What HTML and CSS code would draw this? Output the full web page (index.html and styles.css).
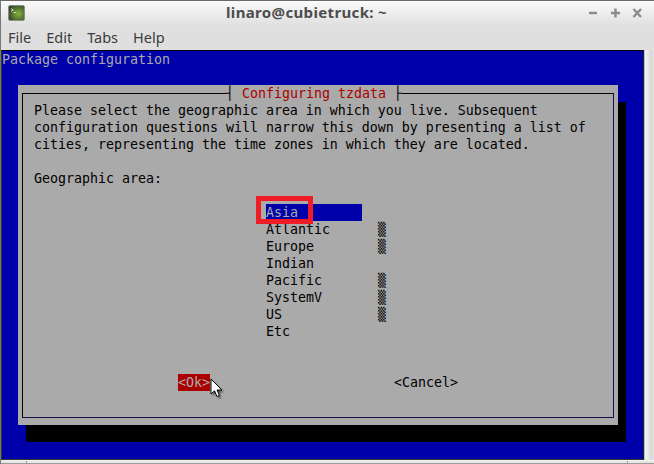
FILE: index.html
```html
<!DOCTYPE html>
<html lang="en">
<head>
<meta charset="utf-8">
<title>linaro@cubietruck: ~</title>
<link rel="stylesheet" href="styles.css">
</head>
<body>
<div class="window">
  <header class="titlebar">
    <svg class="app-icon" width="17" height="16" viewBox="0 0 18 18" preserveAspectRatio="none">
      <defs>
        <radialGradient id="iconbg" cx="0.62" cy="0.55" r="0.7">
          <stop offset="0" stop-color="#86b240"/>
          <stop offset="0.6" stop-color="#4f7030"/>
          <stop offset="1" stop-color="#2f3a2a"/>
        </radialGradient>
      </defs>
      <rect x="0.5" y="0.5" width="17" height="17" rx="2" fill="url(#iconbg)" stroke="#8a8a86"/>
      <path d="M3.5 4 L5.500 5.500 L3.500 7" fill="none" stroke="#f2f2ee" stroke-width="1"/>
      <path d="M6 8.500 H8.500" stroke="#dfe8d2" stroke-width="1"/>
    </svg>
    <div class="title">linaro@cubietruck: ~</div>
    <div class="controls">
      <svg width="60" height="12" viewBox="0 0 60 12">
        <g stroke="#8b8b8b" stroke-width="2.4" fill="none">
          <path d="M3 6 H11"/>
          <path d="M25 6 H34 M29.500 1.500 V10.500"/>
          <path d="M47.500 2 L55 10 M55 2 L47.500 10"/>
        </g>
      </svg>
    </div>
  </header>
  <nav class="menubar">
    <span class="menu-item">File</span>
    <span class="menu-item">Edit</span>
    <span class="menu-item">Tabs</span>
    <span class="menu-item">Help</span>
  </nav>
  <div class="workspace">
    <main class="terminal">
      <div class="backtitle">Package configuration</div>
      <section class="dialog">
        <div class="frame">
          <h1 class="dialog-title"><span class="tee">┤</span> Configuring tzdata <span class="tee">├</span></h1>
          <p class="prompt">Please select the geographic area in which you live. Subsequent
configuration questions will narrow this down by presenting a list of
cities, representing the time zones in which they are located.

Geographic area:</p>
          <ul class="options">
            <li class="option selected">Asia</li>
            <li class="option">Atlantic<span class="scroll">▒</span></li>
            <li class="option">Europe<span class="scroll">▒</span></li>
            <li class="option">Indian</li>
            <li class="option">Pacific<span class="scroll">▒</span></li>
            <li class="option">SystemV<span class="scroll">▒</span></li>
            <li class="option">US<span class="scroll">▒</span></li>
            <li class="option">Etc</li>
          </ul>
          <div class="buttons">
            <span class="btn btn-ok">&lt;Ok&gt;</span>
            <span class="btn btn-cancel">&lt;Cancel&gt;</span>
          </div>
        </div>
      </section>
      <div class="annotation"></div>
      <svg class="pointer" width="16" height="24" viewBox="0 0 16 24">
        <defs><filter id="blur" x="-30%" y="-30%" width="160%" height="160%"><feGaussianBlur stdDeviation="0.9"/></filter></defs>
        <path d="M2 2 V17 L5.500 13.800 L8 19.500 L10.500 18.300 L8 13 H13 Z" fill="#000" opacity="0.55" filter="url(#blur)" transform="translate(0.800 1.200)"/>
        <path d="M1 1 V16 L4.500 12.800 L7 18.500 L9.500 17.300 L7 12 H12 Z" fill="#fff" stroke="#000" stroke-width="1" stroke-linejoin="round"/>
      </svg>
    </main>
    <div class="scrollbar"></div>
  </div>
  <footer class="statusbar"><span class="grip"></span></footer>
</div>
</body>
</html>
```
FILE: styles.css
```css
* { box-sizing: border-box; }
html, body { margin: 0; padding: 0; }
body { background: #dfdfdf; }
.window {
  width: 654px;
  height: 464px;
  display: flex;
  flex-direction: column;
  background: #dfdfdf;
  border-top: 1px solid #6a6a6a;
  border-left: 1px solid #77787a;
  overflow: hidden;
}
.titlebar {
  height: 25px;
  display: flex;
  align-items: center;
  position: relative;
  padding-left: 7px;
  background: linear-gradient(#fbfbfb, #dfdfdf);
}
.app-icon { flex: none; margin-bottom: 1px; }
.title {
  position: absolute;
  left: 225px;
  top: 1px;
  font: bold 15px/20px "Noto Sans", sans-serif;
  letter-spacing: 0.35px;
  color: #4d4d4d;
  white-space: nowrap;
}
.controls { margin-left: auto; margin-right: 8px; margin-bottom: 2px; display: flex; }
.menubar {
  height: 24px;
  display: flex;
  gap: 15px;
  padding: 1px 0 0 7px;
  font: 14.5px/21px "Noto Sans", sans-serif;
  color: #3c3c3c;
}
.workspace { flex: 1; min-height: 0; display: flex; }
.terminal {
  position: relative;
  width: 643px;
  flex: none;
  background: #0000aa;
  border-top: 1px solid #000;
  border-bottom: 1px solid #333;
  border-left: 1px solid #333;
  border-right: 1px solid #222;
  font: 13.29px/17px "DejaVu Sans Mono", monospace;
  color: #000;
}
.backtitle { height: 34px; color: #aaaaaa; }
.dialog {
  width: 600px;
  height: 340px;
  margin-left: 16px;
  padding: 8px 4px;
  background: #aaaaaa;
  box-shadow: 8px 17px 0 #000;
}
.frame {
  height: 325px;
  border: 1px solid #10104a;
  border-top-color: #000;
  border-left-color: #000;
  padding-left: 11px;
}
.dialog-title {
  margin: -9px 0 0 192px;
  width: 176px;
  height: 17px;
  background: #aaaaaa;
  font: inherit;
  color: #aa0000;
  white-space: pre;
}
.tee { color: #000; }
.prompt {
  margin: 0;
  height: 85px;
  white-space: pre;
}
.options {
  list-style: none;
  margin: 17px 0 0 232px;
  padding: 0;
  width: 128px;
}
.option {
  position: relative;
  height: 17px;
  width: 96px;
  white-space: pre;
}
.selected { background: #0000aa; color: #aaaaaa; }
.scroll { position: absolute; left: 112px; top: 0; }
.buttons {
  margin-top: 34px;
  margin-left: 144px;
  display: flex;
  height: 17px;
}
.btn { white-space: pre; }
.btn-ok { background: #aa0000; color: #aaaaaa; }
.btn-cancel { margin-left: 184px; }
.annotation {
  position: absolute;
  left: 254px;
  top: 145px;
  width: 57px;
  height: 28px;
  border: 5px solid #ee1c25;
}
.pointer { position: absolute; left: 208px; top: 327px; }
.scrollbar {
  flex: 1;
  background: linear-gradient(90deg, #f4f4f4 0, #ececec 2px, #d6d6d6 7px, #e8e8e8 100%);
  border-left: 1px solid #bdbdbd;
}
.statusbar {
  flex: none;
  height: 4px;
  position: relative;
  background: #e6e6e6;
  border-top: 1px solid #f4f4f4;
  border-bottom: 1px solid #9a9a9a;
}
.grip {
  display: block;
  margin-left: 25px;
  width: 602px;
  height: 2px;
  border-left: 1px solid #9a9a9a;
  border-right: 1px solid #9a9a9a;
}
```
